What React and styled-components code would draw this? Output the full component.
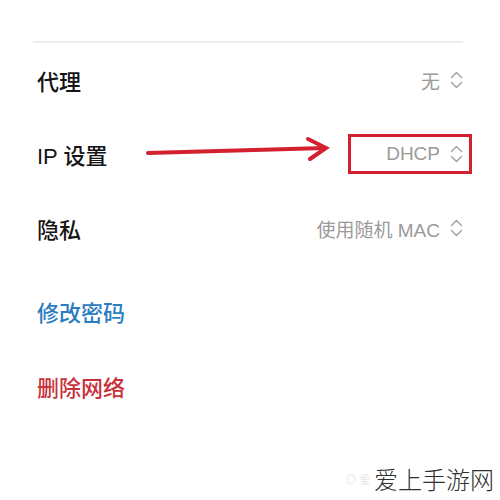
import React from 'react';
import styled, { createGlobalStyle } from 'styled-components';

const GlobalStyle = createGlobalStyle`
  html, body {
    margin: 0;
    padding: 0;
    background: #ffffff;
  }
  body {
    font-family: "Noto Sans CJK SC", "Noto Sans", sans-serif;
  }
`;

const rows = [
  { label: '代理', value: '无' },
  { label: 'IP 设置', value: 'DHCP', highlighted: true },
  { label: '隐私', value: '使用随机 MAC' },
];

const links = [
  { text: '修改密码', tone: 'blue' },
  { text: '删除网络', tone: 'red' },
];

const Chevrons = () => (
  <ChevronIcon width="13" height="20" viewBox="0 0 13 20">
    <path d="M1.5 7.5 L6.5 2.5 L11.5 7.5" />
    <path d="M1.5 12.5 L6.5 17.5 L11.5 12.5" />
  </ChevronIcon>
);

const App = () => {
  return (
    <Page>
      <GlobalStyle />
      <Settings>
        <Divider />
        {rows.map(row => (
          <Row key={row.label}>
            <Label>{row.label}</Label>
            <Value>
              <ValueText>{row.value}</ValueText>
              <Chevrons />
            </Value>
            {row.highlighted && <Highlight />}
          </Row>
        ))}
        <Spacer />
        {links.map(link => (
          <LinkRow key={link.text}>
            <LinkText $tone={link.tone}>{link.text}</LinkText>
          </LinkRow>
        ))}
      </Settings>

      <Arrow width="200" height="40" viewBox="0 0 200 40">
        <path d="M8 25 L185 20" />
        <path d="M168 11 L186 20 L170 31" />
      </Arrow>

      <Watermark>
        <WatermarkFaint>◎ 爱</WatermarkFaint>
        爱上手游网
      </Watermark>
    </Page>
  );
};

const Page = styled.div`
  position: relative;
  width: 500px;
  height: 500px;
  overflow: hidden;
  background: #fff;
`;

const Settings = styled.div`
  display: flex;
  flex-direction: column;
  padding: 41px 37px 0 33px;
`;

const Divider = styled.div`
  height: 2px;
  background: #eeeeee;
`;

const Row = styled.div`
  position: relative;
  height: 74px;
  display: flex;
  align-items: center;
  justify-content: space-between;
  padding-left: 4px;
`;

const Label = styled.div`
  font-size: 22px;
  font-weight: 500;
  color: #151515;
  font-family: "Liberation Sans", "Noto Sans CJK SC", sans-serif;
`;

const Value = styled.div`
  display: flex;
  align-items: center;
  gap: 10px;
`;

const ValueText = styled.span`
  font-size: 19px;
  color: #9a9a9a;
  font-family: "Liberation Sans", "Noto Sans CJK SC", sans-serif;
`;

const ChevronIcon = styled.svg`
  fill: none;
  stroke: #a8a8a8;
  stroke-width: 1.6;
  stroke-linecap: round;
  stroke-linejoin: round;
`;

const Highlight = styled.div`
  position: absolute;
  right: -9px;
  top: 17px;
  width: 124px;
  height: 40px;
  box-sizing: border-box;
  border: 3px solid #d3202f;
`;

const Spacer = styled.div`
  height: 8px;
`;

const LinkRow = styled.div`
  height: 75px;
  display: flex;
  align-items: center;
  padding-left: 4px;
`;

const LinkText = styled.span`
  font-size: 22px;
  font-weight: 500;
  color: ${p => (p.$tone === 'red' ? '#c9313b' : '#2a7dc2')};
`;

const Arrow = styled.svg`
  position: absolute;
  left: 140px;
  top: 128px;
  fill: none;
  stroke: #d3202f;
  stroke-width: 4;
  stroke-linecap: round;
  stroke-linejoin: miter;
`;

const Watermark = styled.div`
  position: absolute;
  right: 6px;
  bottom: 4px;
  display: flex;
  align-items: center;
  font-size: 24px;
  font-weight: 300;
  color: #2e2e2e;
`;

const WatermarkFaint = styled.span`
  font-size: 11px;
  color: #dcdcdc;
  margin-right: 4px;
`;

export default App;
